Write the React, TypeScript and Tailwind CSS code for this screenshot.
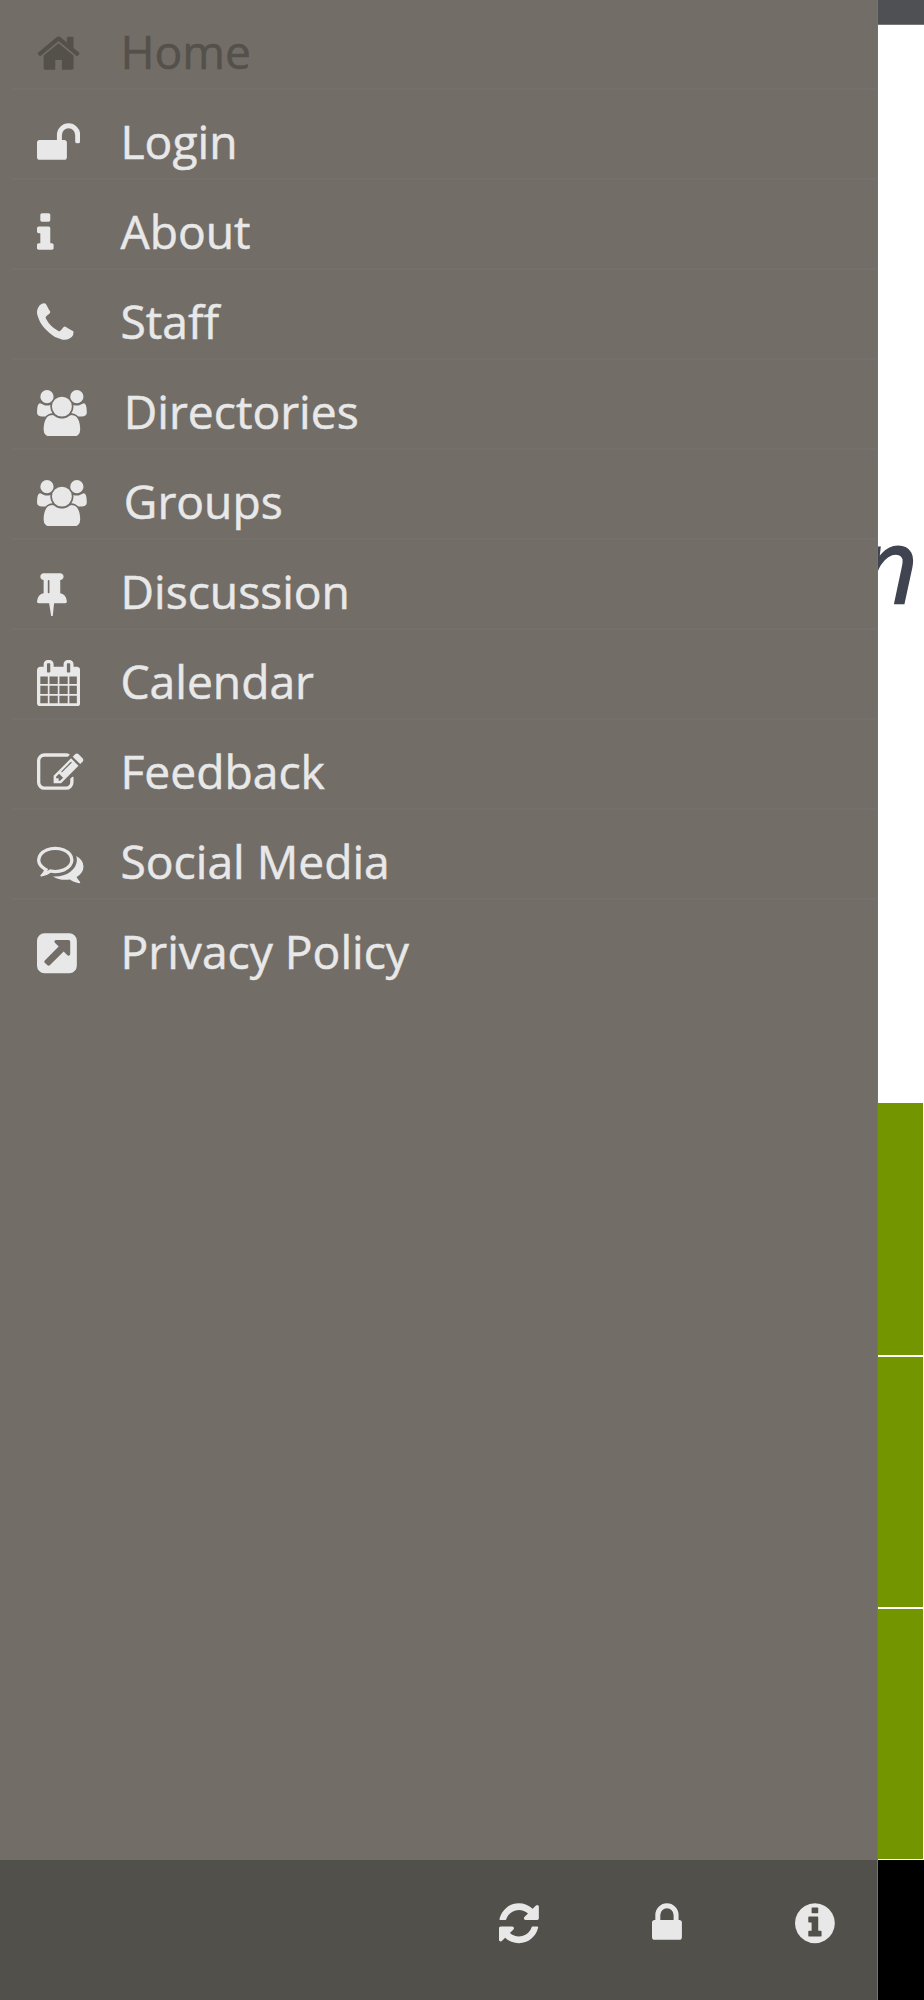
import React from "react";

type Glyph = { width: number; path: string };

// Glyph outlines on a 1792 unit em, y axis pointing up
const glyphs = {
  home: {
    width: 1664,
    path: "M1408 544v-480q0 -26 -19 -45t-45 -19h-384v384h-256v-384h-384q-26 0 -45 19t-19 45v480q0 1 0.5 3t0.5 3l575 474l575 -474q1 -2 1 -6zM1631 613l-62 -74q-8 -9 -21 -11h-3q-13 0 -21 7l-692 577l-692 -577q-12 -8 -24 -7q-13 2 -21 11l-62 74q-8 10 -7 23.5t11 21.5l719 599q32 26 76 26t76 -26l244 -204v195q0 14 9 23t23 9h192q14 0 23 -9t9 -23v-408l219 -182q10 -8 11 -21.5t-7 -23.5z",
  },
  unlock: {
    width: 1664,
    path: "M1664 960v-256q0 -26 -19 -45t-45 -19h-64q-26 0 -45 19t-19 45v256q0 106 -75 181t-181 75t-181 -75t-75 -181v-192h96q40 0 68 -28t28 -68v-576q0 -40 -28 -68t-68 -28h-960q-40 0 -68 28t-28 68v576q0 40 28 68t68 28h672v192q0 185 131.5 316.5t316.5 131.5t316.5 -131.5t131.5 -316.5z",
  },
  info: {
    width: 640,
    path: "M640 192v-128q0 -26 -19 -45t-45 -19h-512q-26 0 -45 19t-19 45v128q0 26 19 45t45 19h64v384h-64q-26 0 -45 19t-19 45v128q0 26 19 45t45 19h384q26 0 45 -19t19 -45v-576h64q26 0 45 -19t19 -45zM512 1344v-192q0 -26 -19 -45t-45 -19h-256q-26 0 -45 19t-19 45v192q0 26 19 45t45 19h256q26 0 45 -19t19 -45z",
  },
  phone: {
    width: 1408,
    path: "M1408 296q0 -27 -10 -70.5t-21 -68.5q-21 -50 -122 -106q-94 -51 -186 -51q-27 0 -53 3.5t-57.5 12.5t-47 14.5t-55.5 20.5t-49 18q-98 35 -175 83q-127 79 -264 216t-216 264q-48 77 -83 175q-3 9 -18 49t-20.5 55.5t-14.5 47t-12.5 57.5t-3.5 53q0 92 51 186q56 101 106 122q25 11 68.5 21t70.5 10q14 0 21 -3q18 -6 53 -76q11 -19 30 -54t35 -63.5t31 -53.5q3 -4 17.5 -25t21.5 -35.5t7 -28.5q0 -20 -28.5 -50t-62 -55t-62 -53t-28.5 -46q0 -9 5 -22.5t8.5 -20.5t14 -24t11.5 -19q76 -137 174 -235t235 -174q2 -1 19 -11.5t24 -14t20.5 -8.5t22.5 -5q18 0 46 28.5t53 62t55 62t50 28.5q14 0 28.5 -7t35.5 -21.5t25 -17.5q25 -15 53.5 -31t63.5 -35t54 -30q70 -35 76 -53q3 -7 3 -21z",
  },
  group: {
    width: 1920,
    path: "M593 640q-162 -5 -265 -128h-134q-82 0 -138 40.5t-56 118.5q0 353 124 353q6 0 43.5 -21t97.5 -42.5t119 -21.5q67 0 133 23q-5 -37 -5 -66q0 -139 81 -256zM1664 3q0 -120 -73 -189.5t-194 -69.5h-874q-121 0 -194 69.5t-73 189.5q0 53 3.5 103.5t14 109t26.5 108.5t43 97.5t62 81t85.5 53.5t111.5 20q10 0 43 -21.5t73 -48t107 -48t135 -21.5t135 21.5t107 48t73 48t43 21.5q61 0 111.5 -20t85.5 -53.5t62 -81t43 -97.5t26.5 -108.5t14 -109t3.5 -103.5zM640 1280q0 -106 -75 -181t-181 -75t-181 75t-75 181t75 181t181 75t181 -75t75 -181zM1344 896q0 -159 -112.5 -271.5t-271.5 -112.5t-271.5 112.5t-112.5 271.5t112.5 271.5t271.5 112.5t271.5 -112.5t112.5 -271.5zM1920 671q0 -78 -56 -118.5t-138 -40.5h-134q-103 123 -265 128q81 117 81 256q0 29 -5 66q66 -23 133 -23q59 0 119 21.5t97.5 42.5t43.5 21q124 0 124 -353zM1792 1280q0 -106 -75 -181t-181 -75t-181 75t-75 181t75 181t181 75t181 -75t75 -181z",
  },
  pin: {
    width: 1152,
    path: "M480 672v448q0 14 -9 23t-23 9t-23 -9t-9 -23v-448q0 -14 9 -23t23 -9t23 9t9 23zM1152 320q0 -26 -19 -45t-45 -19h-429l-51 -483q-2 -12 -10.5 -20.5t-20.5 -8.5h-1q-27 0 -32 27l-76 485h-404q-26 0 -45 19t-19 45q0 123 78.5 221.5t177.5 98.5v512q-52 0 -90 38t-38 90t38 90t90 38h640q52 0 90 -38t38 -90t-38 -90t-90 -38v-512q99 0 177.5 -98.5t78.5 -221.5z",
  },
  calendar: {
    width: 1664,
    path: "M128 -128h288v288h-288v-288zM480 -128h320v288h-320v-288zM128 224h288v320h-288v-320zM480 224h320v320h-320v-320zM128 608h288v288h-288v-288zM864 -128h320v288h-320v-288zM480 608h320v288h-320v-288zM1248 -128h288v288h-288v-288zM864 224h320v320h-320v-320zM512 1088v288q0 13 -9.5 22.5t-22.5 9.5h-64q-13 0 -22.5 -9.5t-9.5 -22.5v-288q0 -13 9.5 -22.5t22.5 -9.5h64q13 0 22.5 9.5t9.5 22.5zM1248 224h288v320h-288v-320zM864 608h320v288h-320v-288zM1248 608h288v288h-288v-288zM1280 1088v288q0 13 -9.5 22.5t-22.5 9.5h-64q-13 0 -22.5 -9.5t-9.5 -22.5v-288q0 -13 9.5 -22.5t22.5 -9.5h64q13 0 22.5 9.5t9.5 22.5zM1664 1152v-1280q0 -52 -38 -90t-90 -38h-1408q-52 0 -90 38t-38 90v1280q0 52 38 90t90 38h128v96q0 66 47 113t113 47h64q66 0 113 -47t47 -113v-96h384v96q0 66 47 113t113 47h64q66 0 113 -47t47 -113v-96h128q52 0 90 -38t38 -90z",
  },
  edit: {
    width: 1792,
    path: "M888 352l116 116l-152 152l-116 -116v-56h96v-96h56zM1328 1072q-16 16 -33 -1l-350 -350q-17 -17 -1 -33t33 1l350 350q17 17 1 33zM1408 478v-190q0 -119 -84.5 -203.5t-203.5 -84.5h-832q-119 0 -203.5 84.5t-84.5 203.5v832q0 119 84.5 203.5t203.5 84.5h832q63 0 117 -25q15 -7 18 -23q3 -17 -9 -29l-49 -49q-14 -14 -32 -8q-23 6 -45 6h-832q-66 0 -113 -47t-47 -113v-832q0 -66 47 -113t113 -47h832q66 0 113 47t47 113v126q0 13 9 22l64 64q15 15 35 7t20 -29zM1312 1216l288 -288l-672 -672h-288v288zM1756 1084l-92 -92l-288 288l92 92q28 28 68 28t68 -28l152 -152q28 -28 28 -68t-28 -68z",
  },
  comments: {
    width: 1792,
    path: "M704 1152q-153 0 -286 -52t-211.5 -141t-78.5 -191q0 -82 53 -158t149 -132l97 -56l-35 -84q34 20 62 39l44 31l53 -10q78 -14 153 -14q153 0 286 52t211.5 141t78.5 191t-78.5 191t-211.5 141t-286 52zM704 1280q191 0 353.5 -68.5t256.5 -186.5t94 -257t-94 -257t-256.5 -186.5t-353.5 -68.5q-86 0 -176 16q-124 -88 -278 -128q-36 -9 -86 -16h-3q-11 0 -20.5 8t-11.5 21q-1 3 -1 6.5t0.5 6.5t2 6l2.5 5t3.5 5.5t4 5t4.5 5t4 4.5q5 6 23 25t26 29.5t22.5 29t25 38.5t20.5 44q-124 72 -195 177t-71 224q0 139 94 257t256.5 186.5t353.5 68.5zM1526 111q10 -24 20.5 -44t25 -38.5t22.5 -29t26 -29.5t23 -25q1 -1 4 -4.5t4.5 -5t4 -5t3.5 -5.5l2.5 -5t2 -6t0.5 -6.5t-1 -6.5q-3 -14 -13 -22t-22 -7q-50 7 -86 16q-154 40 -278 128q-90 -16 -176 -16q-271 0 -472 132q58 -4 88 -4q161 0 309 45t264 129q125 92 192 212t67 254q0 77 -23 152q129 -71 204 -178t75 -230q0 -120 -71 -224.5t-195 -176.5z",
  },
  external: {
    width: 1536,
    path: "M1280 608v480q0 26 -19 45t-45 19h-480q-42 0 -59 -39q-17 -41 14 -70l144 -144l-534 -534q-19 -19 -19 -45t19 -45l102 -102q19 -19 45 -19t45 19l534 534l144 -144q18 -19 45 -19q12 0 25 5q39 17 39 59zM1536 1120v-960q0 -119 -84.5 -203.5t-203.5 -84.5h-960q-119 0 -203.5 84.5t-84.5 203.5v960q0 119 84.5 203.5t203.5 84.5h960q119 0 203.5 -84.5t84.5 -203.5z",
  },
  refresh: {
    width: 1536,
    path: "M1511 480q0 -5 -1 -7q-64 -268 -268 -434.5t-478 -166.5q-146 0 -282.5 55t-243.5 157l-129 -129q-19 -19 -45 -19t-45 19t-19 45v448q0 26 19 45t45 19h448q26 0 45 -19t19 -45t-19 -45l-137 -137q71 -66 161 -102t187 -36q134 0 250 65t186 179q11 17 53 117q8 23 30 23h192q13 0 22.5 -9.5t9.5 -22.5zM1536 1280v-448q0 -26 -19 -45t-45 -19h-448q-26 0 -45 19t-19 45t19 45l138 138q-148 137 -349 137q-134 0 -250 -65t-186 -179q-11 -17 -53 -117q-8 -23 -30 -23h-199q-13 0 -22.5 9.5t-9.5 22.5v7q65 268 270 434.5t480 166.5q146 0 284 -55.5t245 -156.5l130 129q19 19 45 19t45 -19t19 -45z",
  },
  lock: {
    width: 1152,
    path: "M320 768h512v192q0 106 -75 181t-181 75t-181 -75t-75 -181v-192zM1152 672v-576q0 -40 -28 -68t-68 -28h-960q-40 0 -68 28t-28 68v576q0 40 28 68t68 28h32v192q0 184 132 316t316 132t316 -132t132 -316v-192h32q40 0 68 -28t28 -68z",
  },
  infoCircle: {
    width: 1536,
    path: "M1024 160v160q0 14 -9 23t-23 9h-96v512q0 14 -9 23t-23 9h-320q-14 0 -23 -9t-9 -23v-160q0 -14 9 -23t23 -9h96v-320h-96q-14 0 -23 -9t-9 -23v-160q0 -14 9 -23t23 -9h448q14 0 23 9t9 23zM896 1056v160q0 14 -9 23t-23 9h-192q-14 0 -23 -9t-9 -23v-160q0 -14 9 -23t23 -9h192q14 0 23 9t9 23zM1536 640q0 -209 -103 -385.5t-279.5 -279.5t-385.5 -103t-385.5 103t-279.5 279.5t-103 385.5t103 385.5t279.5 279.5t385.5 103t385.5 -103t279.5 -279.5t103 -385.5z",
  },
} satisfies Record<string, Glyph>;

type IconName = keyof typeof glyphs;

const Icon: React.FC<{ name: IconName }> = ({ name }) => {
  const { width, path } = glyphs[name];
  return (
    <svg
      viewBox={`0 -1536 ${width} 1792`}
      className="h-[46.5px] w-auto shrink-0"
      fill="currentColor"
      aria-hidden="true"
    >
      <path transform="scale(1 -1)" fillRule="evenodd" d={path} />
    </svg>
  );
};

const menuItems: { label: string; icon: IconName; active?: boolean }[] = [
  { label: "Home", icon: "home", active: true },
  { label: "Login", icon: "unlock" },
  { label: "About", icon: "info" },
  { label: "Staff", icon: "phone" },
  { label: "Directories", icon: "group" },
  { label: "Groups", icon: "group" },
  { label: "Discussion", icon: "pin" },
  { label: "Calendar", icon: "calendar" },
  { label: "Feedback", icon: "edit" },
  { label: "Social Media", icon: "comments" },
  { label: "Privacy Policy", icon: "external" },
];

const toolbarIcons: IconName[] = ["refresh", "lock", "infoCircle"];

const Drawer: React.FC = () => (
  <aside className="flex w-[878px] shrink-0 flex-col border-r border-[#77726d] bg-[#726d67] text-[#e8e8e8]">
    <nav className="flex-1 pl-[11px]">
      <ul>
        {menuItems.map((item) => (
          <li
            key={item.label}
            className="h-[90px] border-b-2 border-[#75706c] pt-[28px] pl-[26px] last:border-transparent"
          >
            <a
              className={`flex h-[47px] items-start gap-[37px] ${
                item.active ? "text-[#54504a]" : ""
              }`}
            >
              <span className="flex min-w-[46.5px] pt-[1.5px]">
                <Icon name={item.icon} />
              </span>
              <span className="text-[46.2px] leading-[47px] whitespace-nowrap [-webkit-text-stroke:0.5px]">
                {item.label}
              </span>
            </a>
          </li>
        ))}
      </ul>
    </nav>
    {/* Bottom toolbar */}
    <div className="flex h-[140px] bg-[#52504a] pt-[40px] pl-[445px]">
      {toolbarIcons.map((name) => (
        <button key={name} className="flex w-[148px] shrink-0 justify-center">
          <Icon name={name} />
        </button>
      ))}
    </div>
  </aside>
);

// Sliver of the page that stays visible beside the open drawer
const PageBehind: React.FC = () => (
  <main className="flex w-[46px] flex-col overflow-hidden bg-white">
    <div className="h-[25px] border-b border-[#77777a] bg-[#4f5054]" />
    <div className="flex h-[1078px] justify-end overflow-hidden pt-[467px] pr-[6px]">
      <span className="text-[104px] leading-[144px] text-[#3f4450] italic [-webkit-text-stroke:1.5px]">
        n
      </span>
    </div>
    <div className="flex flex-col gap-[2px] pr-px">
      <div className="h-[252px] bg-[#739600]" />
      <div className="h-[250px] bg-[#739600]" />
      <div className="h-[250px] bg-[#739600]" />
    </div>
    <div className="mt-px flex-1 bg-black" />
  </main>
);

const App: React.FC = () => {
  return (
    <div className="flex h-[2000px] w-[924px] overflow-hidden font-['Open_Sans',sans-serif]">
      <Drawer />
      <PageBehind />
    </div>
  );
};

export default App;
